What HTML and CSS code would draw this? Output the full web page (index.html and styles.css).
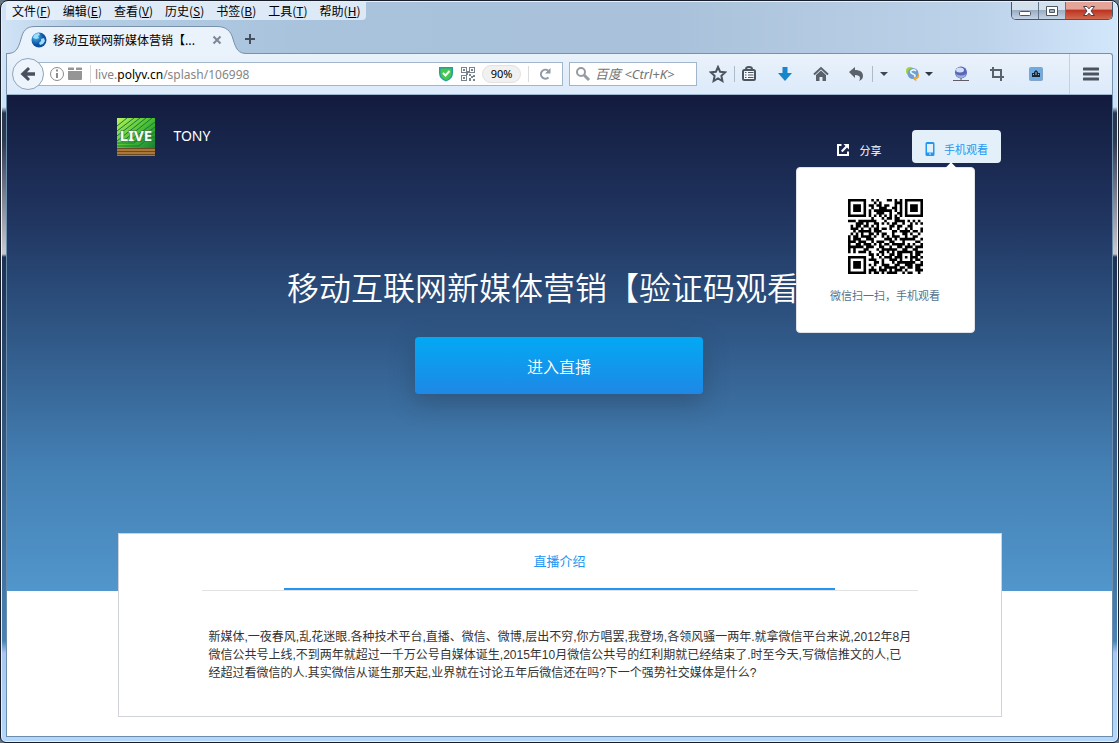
FILE: index.html
```html
<!DOCTYPE html>
<html lang="zh-CN">
<head>
<meta charset="utf-8">
<title>移动互联网新媒体营销【验证码观看】</title>
<link rel="stylesheet" href="styles.css">
</head>
<body>
<div class="window">
  <header class="titlebar">
    <nav class="menubar" aria-label="菜单">
      <button type="button">文件(<u>F</u>)</button>
      <button type="button">编辑(<u>E</u>)</button>
      <button type="button">查看(<u>V</u>)</button>
      <button type="button">历史(<u>S</u>)</button>
      <button type="button">书签(<u>B</u>)</button>
      <button type="button">工具(<u>T</u>)</button>
      <button type="button">帮助(<u>H</u>)</button>
    </nav>
    <div class="controls">
      <button type="button" class="control" aria-label="最小化">
        <svg width="14" height="14" viewBox="0 0 14 14"><rect x="1.500" y="7.500" width="11" height="4" rx="1" fill="#fff" stroke="#4d5663"/></svg>
      </button>
      <button type="button" class="control" aria-label="最大化">
        <svg width="14" height="14" viewBox="0 0 14 14"><path d="M1.500 2.500h11v9h-11zM4.500 5.500v3h5v-3z" fill="#fff" fill-rule="evenodd" stroke="#4d5663"/></svg>
      </button>
      <button type="button" class="control control-close" aria-label="关闭">
        <svg width="14" height="14" viewBox="0 0 14 14"><path d="M1.500 2.500h3.500l2 2.300 2-2.300h3.500L9 7l3.500 4.500H9L7 9.200 5 11.500H1.500L5 7z" fill="#fff" stroke="#4e3b45"/></svg>
      </button>
    </div>
  </header>

  <div class="tabs">
    <div class="tab">
      <svg class="tab-shape" width="240" height="30" viewBox="0 0 240 30"><path d="M0 30v-1.500C9 28.500 11 24 14 14C16 6 19 1.500 28 1.500H210C219 1.500 224 6 226 14C229 24 231 28.500 240 28.500V30z" fill="#eaf2fb"/><path d="M0 28.500C9 28.500 11 24 14 14C16 6 19 1.500 28 1.500H210C219 1.500 224 6 226 14C229 24 231 28.500 240 28.500" fill="none" stroke="#7890aa"/></svg>
      <svg class="tab-icon" width="16" height="16" viewBox="0 0 16 16"><defs><radialGradient id="globe" cx=".3" cy=".3"><stop offset="0" stop-color="#48b9f0"/><stop offset="1" stop-color="#0d4f9e"/></radialGradient></defs><circle cx="8" cy="8" r="7.500" fill="url(#globe)"/><path d="M3 3q2-2 5-2l1 2-2 1 1 2-3 1-3-1zM10 7l3-1 1 3-2 3-3 1-1-2 2-2z" fill="#9bdcf8"/></svg>
      <span class="tab-title">移动互联网新媒体营销【...</span>
      <button type="button" class="tab-close" aria-label="关闭标签页"><svg width="10" height="10" viewBox="0 0 10 10"><path d="M1.500 1.500l7 7M8.500 1.500l-7 7" stroke="#7c8896" stroke-width="2"/></svg></button>
    </div>
    <button type="button" class="new-tab" aria-label="新建标签页"><svg width="12" height="12" viewBox="0 0 12 12"><path d="M6 1v10M1 6h10" stroke="#444f5b" stroke-width="2"/></svg></button>
  </div>

  <div class="toolbar">
    <button type="button" class="back" aria-label="后退"><svg width="18" height="16" viewBox="0 0 18 16"><path d="M1.500 8L9 1l2 2-3 3.200h8v3.600H8L11 13l-2 2z" fill="#48515d"/></svg></button>
    <div class="address">
      <svg class="info" width="16" height="16" viewBox="0 0 16 16"><circle cx="8" cy="8" r="6.500" fill="none" stroke="#8b8b8b"/><path d="M8 3.500v2M8 7v5" stroke="#8b8b8b" stroke-width="2"/></svg>
      <svg width="16" height="16" viewBox="0 0 16 16"><path d="M1 2q0-.5.5-.5h5q.5 0 .5.500v2H1zM9 2q0-.5.500-.5h5q.5 0 .5.500v2H9zM1 5h14v8q0 1-1 1H2q-1 0-1-1z" fill="#959595"/></svg>
      <label class="url"><span class="url-text">live.<b>polyv.cn</b>/splash/106998</span><input type="text" aria-label="网址"></label>
      <svg width="16" height="16" viewBox="0 0 16 16"><path d="M1 1h14v6q0 6-7 8.500Q1 13 1 7z" fill="#299aa4"/><path d="M2.500 2.500h11V7q0 5-5.500 7.300Q2.500 12 2.500 7z" fill="#45c850"/><path d="M5 7l2.500 2.500L11.500 5" fill="none" stroke="#fff" stroke-width="2"/></svg>
      <svg width="14" height="14" viewBox="0 0 14 14" fill="#78838e"><path d="M0 0h6v6H0zM1 1v4h4V1zM8 0h6v6H8zM9 1v4h4V1zM0 8h6v6H0zM1 9v4h4V9z" fill-rule="evenodd"/><path d="M2 2h2v2H2zM10 2h2v2h-2zM2 10h2v2H2zM8 7h2v2H8zM12 8h2v2h-2zM10 9h2v2h-2zM8 11h2v3H8zM12 12h2v2h-2zM6 4h2v2H6zM5 6h2v2H5z"/></svg>
      <button type="button" class="zoom">90%</button>
      <button type="button" class="reload" aria-label="刷新"><svg width="14" height="14" viewBox="0 0 14 14"><path d="M10.500 10.500A4.500 4.500 0 1 1 10 3.500" fill="none" stroke="#8e99a3" stroke-width="2"/><path d="M7 6.500h5.500V1z" fill="#8e99a3"/></svg></button>
    </div>
    <div class="search">
      <svg width="16" height="16" viewBox="0 0 16 16"><circle cx="6" cy="6" r="4" fill="none" stroke="#969ba1" stroke-width="2"/><path d="M9 9l5 5" stroke="#969ba1" stroke-width="3"/></svg>
      <input type="text" placeholder="百度 &lt;Ctrl+K&gt;" aria-label="搜索">
    </div>
    <div class="tools">
      <button type="button" class="tool star" aria-label="收藏"><svg width="18" height="18" viewBox="0 0 18 18"><path d="M9 2l2.100 4.700 5 .6-3.700 3.500 1 5.200L9 13.400 4.600 16l1-5.200L1.900 7.300l5-.6z" fill="none" stroke="#4b545f" stroke-width="2"/></svg></button>
      <span class="line"></span>
      <button type="button" class="tool list" aria-label="书签"><svg width="16" height="16" viewBox="0 0 16 16"><path d="M5 3q0-2 3-2t3 2" fill="none" stroke="#4b545f" stroke-width="2"/><rect x="2" y="4" width="12" height="10" rx="1.500" fill="#f4f8fd" stroke="#4b545f" stroke-width="2"/><path d="M4 6.500h1.500M7 6.500h5.500M4 9h1.500M7 9h5.500M4 11.500h1.500M7 11.500h5.500" stroke="#4b545f"/></svg></button>
      <button type="button" class="tool" aria-label="下载"><svg width="16" height="16" viewBox="0 0 16 16"><path d="M5.500 1h5v6H15l-7 8-7-8h4.500z" fill="#1786cb"/></svg></button>
      <button type="button" class="tool" aria-label="主页"><svg width="16" height="16" viewBox="0 0 16 16"><path d="M1 8.500L8 2l7 6.500" fill="none" stroke="#59616b" stroke-width="2"/><path d="M3 9l5-4.500L13 9v6h-3.500v-4h-3v4H3z" fill="#59616b"/></svg></button>
      <button type="button" class="tool undo" aria-label="撤销"><svg width="16" height="16" viewBox="0 0 16 16"><path d="M1 6l6-5v3c5 0 8 2 8 6 0 3-2 4-4 5 1.500-2 2-6-4-6v3z" fill="#59616b"/></svg></button>
      <span class="line"></span>
      <button type="button" class="tool drop" aria-label="更多"><svg width="8" height="4" viewBox="0 0 8 4"><path d="M0 0h8L4 4z" fill="#3f4751"/></svg></button>
      <button type="button" class="tool ext" aria-label="扩展"><svg width="16" height="16" viewBox="0 0 16 16"><circle cx="5" cy="5" r="4" fill="#a6d52f"/><circle cx="8" cy="7.500" r="5.500" fill="#6e9fd0"/><path d="M11 5Q9 3 6.500 4.500T8 8t1 3" fill="none" stroke="#e9f3ff" stroke-width="1.500"/><path d="M13.500 7q2 5-2.500 6.500l.5 2L8 13l2.500-3 .5 1.500q2-1 2.500-4.500z" fill="#eba931"/></svg><svg width="8" height="4" viewBox="0 0 8 4"><path d="M0 0h8L4 4z" fill="#303840"/></svg></button>
      <button type="button" class="tool" aria-label="网络"><svg width="16" height="16" viewBox="0 0 16 16"><circle cx="8" cy="6.500" r="6" fill="#5866b8"/><ellipse cx="7" cy="4" rx="4" ry="2.500" fill="#d5def7"/><path d="M3 8q5 3 10 0-1 4-5 4T3 8z" fill="#9eafdf"/><path d="M0 14.500h16M8 12v2" stroke="#625b68"/></svg></button>
      <button type="button" class="tool" aria-label="截图"><svg width="16" height="16" viewBox="0 0 16 16"><path d="M1 4h11v8M4 1v10h11M12 10v5" fill="none" stroke="#59616b" stroke-width="2"/></svg></button>
      <button type="button" class="tool photo" aria-label="图片"><svg width="14" height="14" viewBox="0 0 14 14"><rect x=".5" y=".5" width="13" height="13" rx="1" fill="#70abdf" stroke="#83a4c4"/><path d="M3 10V6h2V5l2-2 2 2v1h2v4z" fill="#172636"/><path d="M6.500 5h1v3h-1zM4 7h1v1H4zM9 7h1v1H9z" fill="#a9bac8"/></svg></button>
      <button type="button" class="tool menu" aria-label="打开菜单"><svg width="16" height="14" viewBox="0 0 16 14"><path d="M1 2h14M1 7h14M1 12h14" stroke="#4b535e" stroke-width="3" stroke-linecap="round"/></svg></button>
    </div>
  </div>

  <main class="page">
    <section class="hero">
      <div class="topline">
        <a class="channel" href="#">
          <svg width="38" height="38" viewBox="0 0 38 38"><defs><linearGradient id="leaf" x1="0" y1="0" x2="1" y2="1"><stop offset="0" stop-color="#bbf35c"/><stop offset=".5" stop-color="#43ba31"/><stop offset="1" stop-color="#087238"/></linearGradient></defs><path fill="url(#leaf)" d="M0 0h38v38H0z"/><path d="M0 8L10 0M0 13L17 0M0 18L23 0M0 23L29 0M5 24L35 0M11 24L38 4M17 24l21-15M23 24l15-10M38 19H26L17 25H0M38 23H28L22 28H0" stroke="#147c35" fill="none"/><path fill="#aa7939" d="M0 30h38v8H0z"/><path d="M0 30.500h38M0 33.500h38M0 36.500h38" stroke="#684b25"/><text x="19" y="23" text-anchor="middle" class="logo-text">LIVE</text></svg>
          <span>TONY</span>
        </a>
        <div class="actions">
          <button type="button" class="share"><svg width="14" height="14" viewBox="0 0 14 14"><path d="M5.500 2H2v10h10V8.500" fill="none" stroke="#fff" stroke-width="2"/><path d="M7.500 1H13v5.500L11 4.600 6.500 9.200 5 7.700 9.500 3z" fill="#fff"/></svg>分享</button>
          <div class="phone-wrap">
            <button type="button" class="phone"><svg width="12" height="16" viewBox="0 0 12 16"><path d="M3 1h6q1.500 0 1.500 1.500v11Q10.500 15 9 15H3q-1.500 0-1.500-1.500v-11Q1.500 1 3 1zM3 3v8.500h6V3zM5 12.500v1h2v-1z" fill="#2196f3" fill-rule="evenodd"/></svg>手机观看</button>
            <div class="popup">
              <svg id="qr" width="75" height="75" viewBox="0 0 29 29" role="img" aria-label="二维码"></svg>
              <p>微信扫一扫，手机观看</p>
            </div>
          </div>
        </div>
      </div>
      <h1>移动互联网新媒体营销【验证码观看】</h1>
      <button type="button" class="enter">进入直播</button>
    </section>
    <section class="card">
      <div class="card-tabs"><button type="button" class="card-tab">直播介绍</button></div>
      <p class="intro">新媒体,一夜春风,乱花迷眼.各种技术平台,直播、微信、微博,层出不穷,你方唱罢,我登场,各领风骚一两年.就拿微信平台来说,2012年8月微信公共号上线,不到两年就超过一千万公号自媒体诞生,2015年10月微信公共号的红利期就已经结束了.时至今天,写微信推文的人,已经超过看微信的人.其实微信从诞生那天起,业界就在讨论五年后微信还在吗?下一个强势社交媒体是什么?</p>
    </section>
  </main>
</div>
<script src="qr.js"></script>
</body>
</html>
```

FILE: styles.css
```css
* { box-sizing: border-box; }
body {
  margin: 0;
  background: #687783;
  font: 12px/18px "Noto Sans CJK SC", sans-serif;
  color: #333;
}
button {
  padding: 0;
  border: 0;
  background: none;
  font: inherit;
  color: inherit;
}
svg { display: block; flex: none; }
h1, p { margin: 0; }

.window {
  display: flex;
  flex-direction: column;
  min-height: 100vh;
  padding: 1px 5px 5px;
  border: 1px solid #171d29;
  border-radius: 8px 8px 6px 6px;
  box-shadow: inset 0 0 0 1px #e4f1fd;
  background:
    linear-gradient(90deg, #d2e4f6 0, #b3cde4 80px, #a9c3dd 300px, #a9c1da 60%, #bdd3ea 88%, #d3e7fb 100%) top / 100% 54px no-repeat,
    linear-gradient(#cfe3f8 106px, #29354c 112px, #303a50 140px, #c8c5ce 250px, #c8c5ce 253px, #1e3152 256px, #4a83b5 640px, #a9c7f0 652px, #b5d7fb 100%);
}

.titlebar {
  display: flex;
  justify-content: space-between;
  align-items: flex-start;
  height: 23px;
}
.menubar {
  display: flex;
  gap: 12px;
  padding: 0 6px;
  border-radius: 0 0 4px 0;
  background: rgba(237, 245, 253, .75);
  color: #000;
}
.controls {
  display: flex;
  border: 1px solid #48566a;
  border-top: 0;
  border-radius: 0 0 5px 5px;
  overflow: hidden;
}
.control {
  display: grid;
  place-items: center;
  width: 27px;
  height: 17px;
  border-right: 1px solid #64758b;
  background: linear-gradient(#d5e0ed 45%, #9caec4 50%, #c4d3e4);
}
.control-close {
  width: 46px;
  border: 0;
  background: linear-gradient(#e5a498 40%, #bd3522 50%, #d16a50);
}

.tabs { display: flex; height: 28px; }
.tab {
  position: relative;
  z-index: 1;
  display: flex;
  align-items: center;
  width: 236px;
  padding: 2px 20px 0 25px;
  color: #000;
}
.tab-shape { position: absolute; left: 1px; top: 0; }
.tab-icon, .tab-title, .tab-close { position: relative; }
.tab-title { flex: 1; padding-left: 6px; white-space: nowrap; }
.new-tab { display: grid; place-items: center; width: 16px; }

.toolbar {
  display: flex;
  align-items: center;
  height: 42px;
  padding: 0 1px 0 5px;
  border: 1px solid #7a91ab;
  border-bottom-color: #9eb6cf;
  border-radius: 0 3px 0 0;
  background: linear-gradient(#eaf2fb, #dceafa);
}
.back {
  z-index: 1;
  display: grid;
  place-items: center;
  flex: none;
  width: 32px;
  height: 32px;
  margin-right: -7px;
  border: 1px solid #8da5bd;
  border-radius: 50%;
  background: #edf4fc;
}
.address, .search {
  display: flex;
  align-items: center;
  height: 24px;
  border: 1px solid #a1b6cb;
  background: #fff;
}
.address { flex: 1; gap: 7px; min-width: 0; padding: 0 1px 0 11px; }
.info { margin-right: -5px; }
.url {
  position: relative;
  flex: 1;
  height: 18px;
  padding-left: 4px;
  border-left: 1px solid #d6d6d6;
  color: #858585;
  line-height: 18px;
  min-width: 0;
}
.url-text { font-family: "Noto Sans", sans-serif; white-space: nowrap; }
.url b { font-weight: 400; color: #000; }
.url input {
  position: absolute;
  inset: 0;
  width: 100%;
  border: 0;
  background: transparent;
}
.zoom {
  width: 39px;
  height: 18px;
  border: 1px solid #e2e2e2;
  border-radius: 9px;
  background: #f1f1f1;
  font: 11px/16px "Noto Sans", sans-serif;
  color: #000;
}
.reload {
  display: grid;
  place-items: center;
  width: 33px;
  height: 16px;
  border-left: 1px solid #dcdcdc;
}
.search { width: 128px; margin-left: 6px; padding-left: 5px; gap: 4px; }
.search input {
  flex: 1;
  min-width: 0;
  padding: 0;
  border: 0;
  background: none;
  font: italic 13px/18px "Noto Sans", "Noto Sans CJK SC", sans-serif;
}
.search input::placeholder { color: #737373; opacity: 1; }

.tools { display: flex; align-items: center; margin-left: 4px; }
.tool {
  display: flex;
  align-items: center;
  justify-content: center;
  width: 36px;
  height: 30px;
}
.line { width: 1px; height: 16px; background: #adbac8; }
.star { width: 33px; }
.list { width: 28px; margin-right: 4px; }
.undo { width: 33px; }
.drop { width: 22px; }
.ext { width: 48px; gap: 4px; }
.photo { width: 42px; margin-right: 12px; }
.menu { width: 42px; height: 40px; border-left: 1px solid #c4d1df; }

.page {
  flex: 1;
  border: solid #6d8dad;
  border-width: 0 1px 1px;
  background: #fff;
}
.hero {
  display: flex;
  flex-direction: column;
  align-items: center;
  padding: 23px 1px 197px 0;
  background: linear-gradient(#131b3e, #203560 25%, #315a89 50%, #4480b4 75%, #5196cc);
  color: #fff;
}
.topline {
  display: flex;
  justify-content: space-between;
  width: 80%;
}
.channel {
  display: flex;
  align-items: flex-start;
  gap: 18px;
  color: #fff;
  font: 14px/36px "Noto Sans", sans-serif;
  text-decoration: none;
}
.logo-text {
  font: bold 15px "Noto Sans", sans-serif;
  fill: #f5fff2;
  stroke: #527052;
  stroke-width: 1px;
  paint-order: stroke;
}
.actions { display: flex; align-items: flex-start; gap: 30px; padding-top: 12px; font-size: 11px; }
.share { display: flex; align-items: center; gap: 10px; height: 40px; }
.phone-wrap { position: relative; }
.phone {
  display: flex;
  align-items: center;
  justify-content: center;
  gap: 8px;
  width: 89px;
  height: 33px;
  padding-top: 5px;
  border-radius: 4px;
  background: #e3f0fa;
  color: #2196f3;
}
.popup {
  position: absolute;
  top: 37px;
  right: 26px;
  display: flex;
  flex-direction: column;
  align-items: center;
  gap: 12px;
  width: 179px;
  height: 166px;
  padding-top: 31px;
  border: 1px solid #dfe3e8;
  border-radius: 4px;
  background: #fff;
  color: #54728c;
}
.popup::before {
  content: "";
  position: absolute;
  top: -4px;
  right: 19px;
  width: 8px;
  height: 8px;
  background: #fff;
  transform: rotate(45deg);
}
h1 { margin-top: 92px; font-size: 32px; font-weight: 350; line-height: 48px; }
.enter {
  width: 26%;
  height: 57px;
  margin-top: 27px;
  border-radius: 4px;
  background: linear-gradient(#03a9f4, #1e88e5);
  box-shadow: 0 8px 24px rgba(35, 55, 75, .4);
  font-size: 16px;
  font-weight: 350;
}
.card {
  position: relative;
  width: 80%;
  min-height: 184px;
  margin: -58px auto 19px;
  padding: 0 83px 34px;
  border: 1px solid #d0d3da;
  background: #fff;
}
.card-tabs { display: flex; justify-content: center; border-bottom: 1px solid #e2e2e2; }
.card-tab {
  width: 77%;
  height: 56px;
  border-bottom: 2px solid #2196f3;
  color: #2196f3;
  font-size: 13px;
}
.intro {
  padding: 37px 6px 0 7px;
  font-family: "Liberation Sans", "Noto Sans CJK SC", sans-serif;
}
```

FILE: qr.js
```js
const rows = [
  "11111110010100011010101111111",
  "10000010001010000011101000001",
  "10111010110110110010101011101",
  "10111010010011100110101011101",
  "10111010101111111010101011101",
  "10000010100111001001101000001",
  "11111110101010101010101111111",
  "00000000010001011011000000000",
  "11101111111000100011110101010",
  "00011101001101010110010010101",
  "01011011010100001101100110000",
  "01110100101101101001001010001",
  "00101111101110000110111101101",
  "01010100110101100100011010010",
  "10110111101001010111001001100",
  "10111001110000111010111111001",
  "11101110010111001100010000110",
  "10011011101010110111110101001",
  "11111101110011001001101110111",
  "10100011000101111110011001100",
  "10101110100011010101111110111",
  "00000000110101001101100010110",
  "11111110010010111011101011101",
  "10000010111001001110100010110",
  "10111010001101000101111111001",
  "10111010101001110011001110111",
  "10111010010010111110110110110",
  "10000010111011101011101000111",
  "11111110101101011110010110010"
];
let d = "";
rows.forEach((row, y) => {
  for (const run of row.matchAll(/1+/g)) {
    d += `M${run.index} ${y}h${run[0].length}v1h-${run[0].length}z`;
  }
});
const path = document.createElementNS("http://www.w3.org/2000/svg", "path");
path.setAttribute("d", d);
document.getElementById("qr").append(path);
```
